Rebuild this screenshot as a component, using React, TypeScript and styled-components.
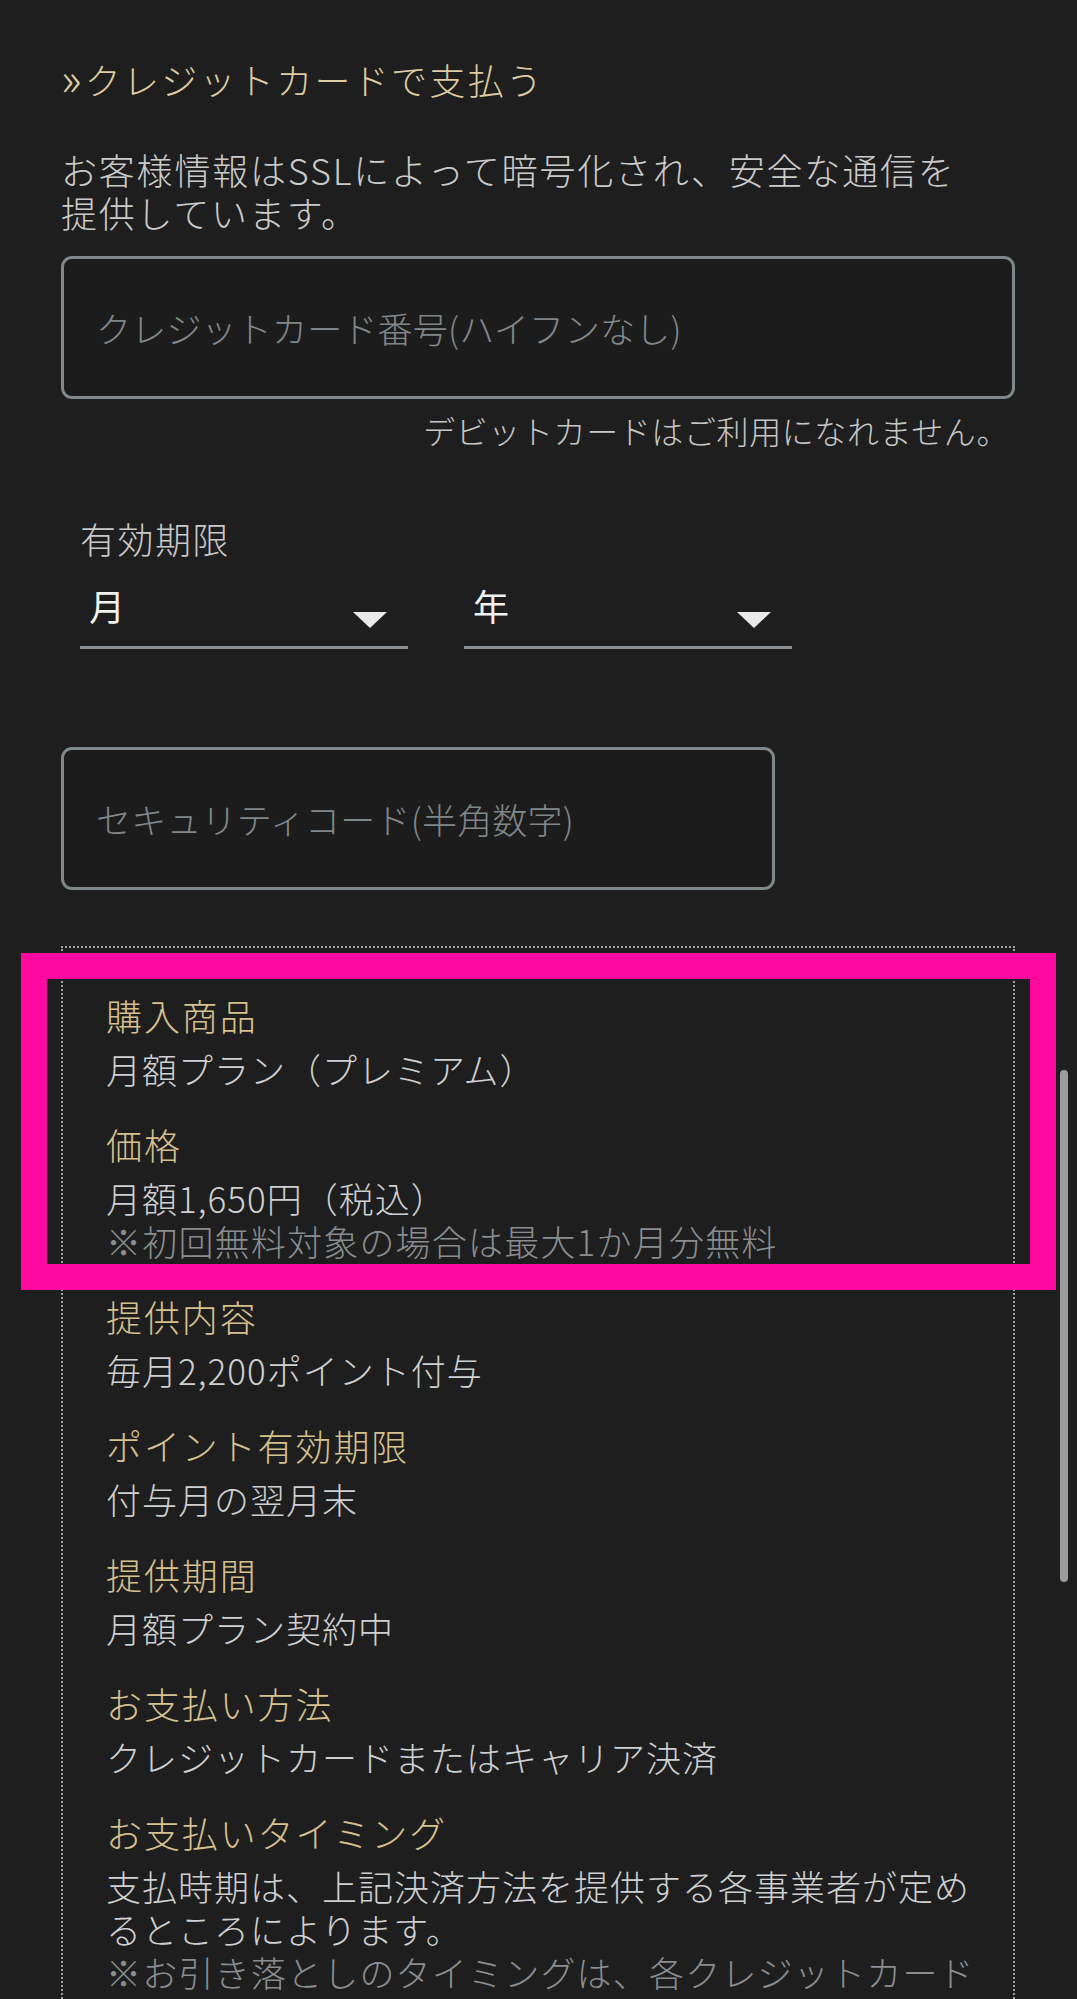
import React from "react";
import styled, { createGlobalStyle } from "styled-components";

const GlobalStyle = createGlobalStyle`
  html, body {
    margin: 0;
    padding: 0;
    background: #1e1e1e;
  }
  body {
    font-family: "Noto Sans CJK JP", "Noto Sans", sans-serif;
    font-weight: 300;
  }
  #root {
    height: 1999px;
    overflow: hidden;
  }
`;

const Page = styled.div`
  position: relative;
  box-sizing: border-box;
  width: 1077px;
  height: 1999px;
  overflow: hidden;
  padding: 57px 62px 0 61px;
  background: #1e1e1e;
`;

const Title = styled.h2`
  margin: 0;
  font-size: 36px;
  font-weight: 300;
  line-height: 44px;
  letter-spacing: 2.3px;
  color: #ddcca2;
`;

const Chevron = styled.span`
  display: inline-block;
  font-size: 46px;
  line-height: 0;
  letter-spacing: 0;
  margin-right: 3px;
  transform: translateY(1px);
`;

const Description = styled.p`
  margin: 47px 0 0;
  font-size: 36px;
  line-height: 43px;
  letter-spacing: 1.8px;
  color: #cacaca;
`;

const Field = styled.div<{ $width?: number; $top: number }>`
  box-sizing: border-box;
  display: flex;
  align-items: center;
  width: ${(p) => (p.$width ? `${p.$width}px` : "100%")};
  height: 143px;
  margin-top: ${(p) => p.$top}px;
  padding-left: 32px;
  border: 3px solid #7f888b;
  border-radius: 11px;
  background: #1c1c1c;
`;

const Placeholder = styled.span`
  font-size: 35px;
  line-height: 44px;
  letter-spacing: 0.2px;
  color: #80878a;
`;

const Note = styled.div`
  margin-top: 9px;
  padding-right: 6px;
  text-align: right;
  font-size: 32px;
  line-height: 44px;
  letter-spacing: 0.6px;
  color: #c6c6c6;
`;

const ExpiryLabel = styled.div`
  margin-top: 64px;
  padding-left: 19px;
  font-size: 36px;
  line-height: 44px;
  letter-spacing: 1.5px;
  color: #c9c9c9;
`;

const SelectRow = styled.div`
  display: flex;
  gap: 56px;
  margin-top: 10px;
  padding-left: 19px;
`;

const Select = styled.div`
  box-sizing: border-box;
  display: flex;
  justify-content: space-between;
  align-items: flex-start;
  width: 328px;
  height: 79px;
  padding: 13px 21px 0 9px;
  border-bottom: 3px solid #8a8f94;
`;

const SelectValue = styled.span`
  font-size: 36px;
  font-weight: 400;
  line-height: 44px;
  color: #f2f2f2;
`;

const Caret = styled.svg`
  display: block;
  margin-top: 29px;
`;

const DetailBox = styled.div`
  position: relative;
  box-sizing: border-box;
  width: 954px;
  height: 1200px;
  margin-top: 56px;
  padding: 46px 18px 0 43px;
  border: 2px dotted #a3a3a3;
  border-bottom: none;
`;

const Item = styled.div`
  & + & {
    margin-top: 33px;
  }
`;

const ItemLabel = styled.div`
  font-size: 36px;
  line-height: 43px;
  letter-spacing: 1.9px;
  color: #d5c08f;
`;

const ItemValue = styled.div`
  margin-top: 10px;
  font-size: 35px;
  line-height: 43px;
  letter-spacing: 1px;
  color: #cdcfd0;
`;

const ItemNote = styled.div`
  font-size: 35px;
  line-height: 43px;
  letter-spacing: 1.2px;
  color: #898d90;
`;

const Highlight = styled.div`
  position: absolute;
  left: -42px;
  top: 5px;
  box-sizing: border-box;
  width: 1035px;
  height: 337px;
  border: 26px solid #ff0aa0;
  pointer-events: none;
`;

const Scrollbar = styled.div`
  position: absolute;
  top: 1070px;
  right: 9px;
  width: 8px;
  height: 512px;
  border-radius: 4px;
  background: #9c9c9c;
`;

type Detail = {
  label: string;
  value: string[];
  notes?: string[];
};

const details: Detail[] = [
  { label: "購入商品", value: ["月額プラン（プレミアム）"] },
  {
    label: "価格",
    value: ["月額1,650円（税込）"],
    notes: ["※初回無料対象の場合は最大1か月分無料"],
  },
  { label: "提供内容", value: ["毎月2,200ポイント付与"] },
  { label: "ポイント有効期限", value: ["付与月の翌月末"] },
  { label: "提供期間", value: ["月額プラン契約中"] },
  { label: "お支払い方法", value: ["クレジットカードまたはキャリア決済"] },
  {
    label: "お支払いタイミング",
    value: [
      "支払時期は、上記決済方法を提供する各事業者が定め",
      "るところによります。",
    ],
    notes: ["※お引き落としのタイミングは、各クレジットカード"],
  },
];

const CaretIcon = () => (
  <Caret width="34" height="16" viewBox="0 0 34 16" aria-hidden="true">
    <polygon points="0,0 34,0 17,16" fill="#e9e9e9" />
  </Caret>
);

const Lines = ({ lines }: { lines: string[] }) => (
  <>
    {lines.map((line, i) => (
      <React.Fragment key={i}>
        {i > 0 && <br />}
        {line}
      </React.Fragment>
    ))}
  </>
);

export default function App() {
  return (
    <>
      <GlobalStyle />
      <Page>
        <Title>
          <Chevron>»</Chevron>クレジットカードで支払う
        </Title>
        <Description>
          <Lines
            lines={[
              "お客様情報はSSLによって暗号化され、安全な通信を",
              "提供しています。",
            ]}
          />
        </Description>

        <Field $top={22}>
          <Placeholder>クレジットカード番号(ハイフンなし)</Placeholder>
        </Field>
        <Note>デビットカードはご利用になれません。</Note>

        <ExpiryLabel>有効期限</ExpiryLabel>
        <SelectRow>
          <Select>
            <SelectValue>月</SelectValue>
            <CaretIcon />
          </Select>
          <Select>
            <SelectValue>年</SelectValue>
            <CaretIcon />
          </Select>
        </SelectRow>

        <Field $top={98} $width={714}>
          <Placeholder>セキュリティコード(半角数字)</Placeholder>
        </Field>

        <DetailBox>
          {details.map((d) => (
            <Item key={d.label}>
              <ItemLabel>{d.label}</ItemLabel>
              <ItemValue>
                <Lines lines={d.value} />
              </ItemValue>
              {d.notes && (
                <ItemNote>
                  <Lines lines={d.notes} />
                </ItemNote>
              )}
            </Item>
          ))}
          <Highlight />
        </DetailBox>

        <Scrollbar />
      </Page>
    </>
  );
}
